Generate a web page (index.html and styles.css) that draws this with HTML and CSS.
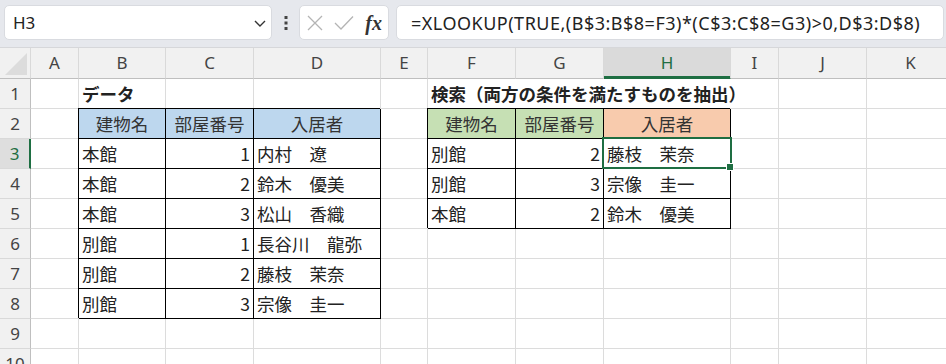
FILE: index.html
```html
<!DOCTYPE html>
<html lang="ja">

<head>
    <meta charset="UTF-8">
    <meta name="viewport" content="width=device-width, initial-scale=1.0">
    <title>XLOOKUP 複数条件</title>
    <link rel="stylesheet" href="styles.css">
</head>

<body>
    <div class="toolbar">
        <div class="namebox">
            <span>H3</span>
            <svg width="14" height="10" viewBox="0 0 14 10"><path d="M2 3 L7 8 L12 3" fill="none" stroke="#333" stroke-width="1.4"/></svg>
        </div>
        <div class="more">
            <svg width="4" height="14" viewBox="0 0 4 14"><rect x="0.5" y="0" width="3" height="3" fill="#444"/><rect x="0.5" y="5.5" width="3" height="3" fill="#444"/><rect x="0.5" y="11" width="3" height="3" fill="#444"/></svg>
        </div>
        <div class="fxbuttons">
            <svg width="16" height="16" viewBox="0 0 16 16"><path d="M1 1 L15 15 M15 1 L1 15" stroke="#b4b4b4" stroke-width="1.3"/></svg>
            <svg width="20" height="16" viewBox="0 0 20 16"><path d="M1 8 L7 14 L19 1.5" fill="none" stroke="#b4b4b4" stroke-width="1.3"/></svg>
            <span class="fx">fx</span>
        </div>
        <div class="formula">=XLOOKUP(TRUE,(B$3:B$8=F3)*(C$3:C$8=G3)&gt;0,D$3:D$8)</div>
    </div>

    <div class="sheet">
        <!-- 列見出し -->
        <div class="row head">
            <div class="corner">
                <svg width="22" height="22" viewBox="0 0 22 22"><polygon points="22,0 22,22 0,22" fill="#dcdcdc"/></svg>
            </div>
            <div>A</div>
            <div>B</div>
            <div>C</div>
            <div>D</div>
            <div>E</div>
            <div>F</div>
            <div>G</div>
            <div class="sel">H</div>
            <div>I</div>
            <div>J</div>
            <div>K</div>
        </div>

        <div class="row">
            <div class="rh">1</div>
            <div class="c"></div>
            <div class="c title">データ</div>
            <div class="c"></div>
            <div class="c"></div>
            <div class="c"></div>
            <div class="c title wide">検索（両方の条件を満たすものを抽出）</div>
            <div class="c"></div>
            <div class="c"></div>
        </div>

        <div class="row">
            <div class="rh">2</div>
            <div class="c"></div>
            <div class="c t th blue">建物名</div>
            <div class="c t th blue">部屋番号</div>
            <div class="c t th blue">入居者</div>
            <div class="c"></div>
            <div class="c t th green">建物名</div>
            <div class="c t th green">部屋番号</div>
            <div class="c t th orange">入居者</div>
            <div class="c"></div>
            <div class="c"></div>
            <div class="c"></div>
        </div>

        <div class="row">
            <div class="rh sel">3</div>
            <div class="c"></div>
            <div class="c t">本館</div>
            <div class="c t num">1</div>
            <div class="c t">内村　遼</div>
            <div class="c"></div>
            <div class="c t">別館</div>
            <div class="c t num">2</div>
            <div class="c t active">藤枝　茉奈</div>
            <div class="c"></div>
            <div class="c"></div>
            <div class="c"></div>
        </div>

        <div class="row">
            <div class="rh">4</div>
            <div class="c"></div>
            <div class="c t">本館</div>
            <div class="c t num">2</div>
            <div class="c t">鈴木　優美</div>
            <div class="c"></div>
            <div class="c t">別館</div>
            <div class="c t num">3</div>
            <div class="c t">宗像　圭一</div>
            <div class="c"></div>
            <div class="c"></div>
            <div class="c"></div>
        </div>

        <div class="row">
            <div class="rh">5</div>
            <div class="c"></div>
            <div class="c t">本館</div>
            <div class="c t num">3</div>
            <div class="c t">松山　香織</div>
            <div class="c"></div>
            <div class="c t">本館</div>
            <div class="c t num">2</div>
            <div class="c t">鈴木　優美</div>
            <div class="c"></div>
            <div class="c"></div>
            <div class="c"></div>
        </div>

        <div class="row">
            <div class="rh">6</div>
            <div class="c"></div>
            <div class="c t">別館</div>
            <div class="c t num">1</div>
            <div class="c t">長谷川　龍弥</div>
            <div class="c"></div>
            <div class="c"></div>
            <div class="c"></div>
            <div class="c"></div>
            <div class="c"></div>
            <div class="c"></div>
            <div class="c"></div>
        </div>

        <div class="row">
            <div class="rh">7</div>
            <div class="c"></div>
            <div class="c t">別館</div>
            <div class="c t num">2</div>
            <div class="c t">藤枝　茉奈</div>
            <div class="c"></div>
            <div class="c"></div>
            <div class="c"></div>
            <div class="c"></div>
            <div class="c"></div>
            <div class="c"></div>
            <div class="c"></div>
        </div>

        <div class="row">
            <div class="rh">8</div>
            <div class="c"></div>
            <div class="c t">別館</div>
            <div class="c t num">3</div>
            <div class="c t">宗像　圭一</div>
            <div class="c"></div>
            <div class="c"></div>
            <div class="c"></div>
            <div class="c"></div>
            <div class="c"></div>
            <div class="c"></div>
            <div class="c"></div>
        </div>

        <div class="row">
            <div class="rh">9</div>
            <div class="c"></div>
            <div class="c"></div>
            <div class="c"></div>
            <div class="c"></div>
            <div class="c"></div>
            <div class="c"></div>
            <div class="c"></div>
            <div class="c"></div>
            <div class="c"></div>
            <div class="c"></div>
            <div class="c"></div>
        </div>

        <div class="row">
            <div class="rh">10</div>
            <div class="c"></div>
            <div class="c"></div>
            <div class="c"></div>
            <div class="c"></div>
            <div class="c"></div>
            <div class="c"></div>
            <div class="c"></div>
            <div class="c"></div>
            <div class="c"></div>
            <div class="c"></div>
            <div class="c"></div>
        </div>
    </div>
</body>

</html>
```

FILE: styles.css
```css
* {
    box-sizing: border-box;
}

body {
    margin: 0;
    width: 946px;
    height: 364px;
    overflow: hidden;
    background: #fff;
    font-family: "Noto Sans CJK JP", sans-serif;
    color: #222;
}

/* 数式バー */
.toolbar {
    height: 48px;
    background: #e6e8ed;
    border-bottom: 1px solid #d6d7da;
    display: flex;
    align-items: flex-start;
    padding: 5px 2px 0 4px;
}

.namebox,
.fxbuttons,
.formula {
    height: 35px;
    background: #fff;
    border: 1px solid #d9dbe0;
    border-radius: 5px;
    display: flex;
    align-items: center;
}

.namebox {
    width: 268px;
    justify-content: space-between;
    padding: 0 4px 0 8px;
}

.namebox span {
    font-family: "Noto Sans", sans-serif;
    font-size: 17px;
}

.more {
    width: 27px;
    height: 35px;
    display: flex;
    justify-content: center;
    align-items: center;
}

.fxbuttons {
    width: 90px;
    padding: 0 6px 0 7px;
    justify-content: space-between;
}

.fx {
    font-family: "Liberation Serif", serif;
    font-style: italic;
    font-weight: bold;
    font-size: 20px;
    color: #333;
    line-height: 1;
}

.formula {
    flex: 1;
    margin-left: 7px;
    padding-left: 14px;
    font-family: "Noto Sans", sans-serif;
    font-size: 18px;
    letter-spacing: 0.5px;
    color: #222;
    white-space: nowrap;
}

/* シート */
.row {
    display: grid;
    grid-template-columns: 31px 48px 87px 88px 127px 47px 88px 88px 127px 48px 88px 88px;
    height: 30px;
}

.row>div {
    border-right: 1px solid #dcdcdc;
    border-bottom: 1px solid #dcdcdc;
    white-space: nowrap;
    line-height: 29px;
}

.head {
    height: 31px;
}

.head>div {
    background: #f1f1f1;
    border-right-color: #d9d9d9;
    border-bottom-color: #bfbfbf;
    text-align: center;
    line-height: 30px;
    font-family: "Noto Sans", sans-serif;
    font-size: 17px;
    color: #444;
}

.head .corner {
    display: flex;
    justify-content: flex-end;
    align-items: flex-end;
    padding: 0 3px 3px 0;
}

.head .sel {
    background: #dadada;
    color: #1e6e42;
    border-bottom-color: #1e6e42;
    box-shadow: inset 0 -2px 0 #1e6e42;
}

.row .rh {
    background: #f1f1f1;
    border-right-color: #bfbfbf;
    border-bottom-color: #d9d9d9;
    text-align: center;
    font-family: "Noto Sans", sans-serif;
    font-size: 17px;
    color: #444;
}

.row .rh.sel {
    background: #dedede;
    color: #1e6e42;
    border-right: 2px solid #1e6e42;
}

.c {
    padding: 0 3px;
    font-size: 17.5px;
}

.title {
    font-weight: bold;
}

.wide {
    grid-column: span 4;
}

/* 罫線付きの表 */
.row .t {
    border-right-color: #000;
    border-bottom-color: #000;
    box-shadow: -1px -1px 0 #000;
}

.th {
    text-align: center;
    color: #333;
}

.blue {
    background: #bdd7ee;
}

.green {
    background: #c6e0b4;
}

.orange {
    background: #f8cbad;
}

.num {
    text-align: right;
}

/* アクティブセル */
.active {
    position: relative;
}

.active::after {
    content: "";
    position: absolute;
    left: -2px;
    top: -2px;
    right: -2px;
    bottom: -1px;
    border: 2px solid #1e6e42;
}

.active::before {
    content: "";
    position: absolute;
    right: -4px;
    bottom: -3px;
    width: 6px;
    height: 6px;
    background: #1e6e42;
    border: 1px solid #fff;
    z-index: 1;
}
```
